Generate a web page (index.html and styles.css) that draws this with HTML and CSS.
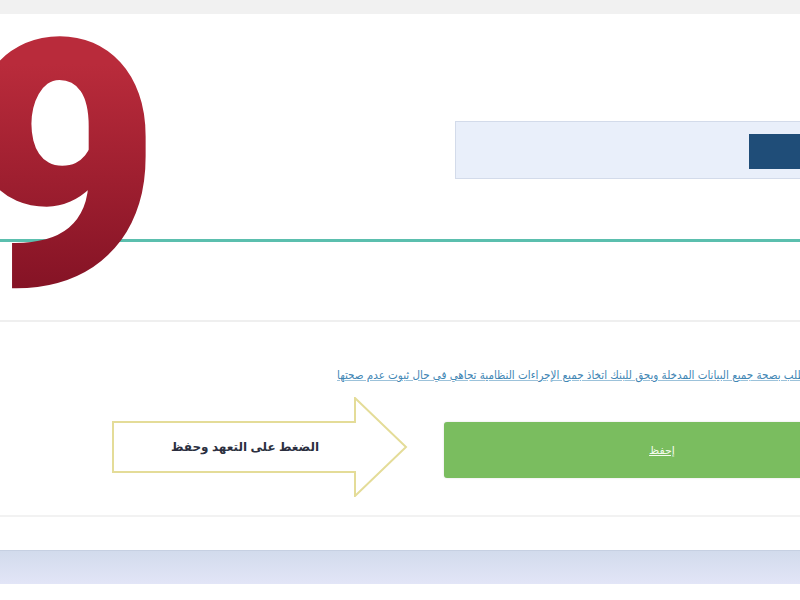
FILE: index.html
```html
<!DOCTYPE html>
<html lang="ar">
<head>
    <meta charset="UTF-8">
    <meta name="viewport" content="width=device-width, initial-scale=1.0">
    <title>التعهد وحفظ الطلب</title>
    <link rel="stylesheet" href="styles.css">
</head>
<body>
    <div class="topbar"></div>

    <div class="panel">
        <div class="step-number">9</div>
        <div class="search-row">
            <div class="search-box">
                <button class="search-btn" type="button"></button>
            </div>
        </div>
        <div class="teal-line"></div>
    </div>

    <div class="pledge">
        <div class="pledge-text">
            <a href="#">أتعهد أنا مقدم الطلب بصحة جميع البيانات المدخلة ويحق للبنك اتخاذ جميع الإجراءات النظامية تجاهي في حال ثبوت عدم صحتها</a>
        </div>
        <div class="action-row">
            <div class="arrow">
                <svg viewBox="0 0 296 100" width="296" height="100">
                    <polygon points="1,25 243,25 243,1 294,50 243,99 243,75 1,75" fill="#fff" stroke="#e4dc98" stroke-width="2"/>
                </svg>
                <span class="arrow-label">الضغط على التعهد وحفظ</span>
            </div>
            <button class="save-btn" type="button">إحفظ</button>
        </div>
    </div>

    <div class="footer-gap"></div>
    <div class="footer-band"></div>
</body>
</html>
```

FILE: styles.css
```css
body {
    margin: 0;
    background: #fff;
    font-family: "DejaVu Sans", "Noto Sans", sans-serif;
    overflow: hidden;
    height: 600px;
}
.topbar {
    height: 14px;
    background: #f1f1f1;
}
.panel {
    position: relative;
    height: 306px;
    background: #fff;
    border-bottom: 2px solid #efefef;
}
.step-number {
    position: absolute;
    left: -39px;
    top: -19px;
    font-family: Roboto, "Liberation Sans", sans-serif;
    font-weight: 900;
    font-size: 345px;
    line-height: 1;
    background: linear-gradient(#b92b3b 20%, #851325 85%);
    -webkit-background-clip: text;
    background-clip: text;
    color: transparent;
    z-index: 2;
}
.search-row {
    display: flex;
    justify-content: flex-end;
    padding-top: 107px;
}
.search-box {
    width: 344px;
    height: 56px;
    background: #e9effa;
    border: 1px solid #d3dbea;
    border-right: none;
    display: flex;
    justify-content: flex-end;
    align-items: center;
}
.search-btn {
    width: 51px;
    height: 35px;
    border: none;
    background: #1f4d78;
    margin-top: 2px;
}
.teal-line {
    margin-top: 60px;
    height: 3px;
    background: #5bbfae;
}
.pledge {
    height: 193px;
    border-bottom: 2px solid #f2f2f2;
}
.pledge-text {
    padding-left: 337px;
    padding-top: 42px;
    white-space: nowrap;
    height: 33px;
}
.pledge-text a {
    display: inline-block;
    direction: rtl;
    color: #3f86b4;
    font-family: "DejaVu Sans Condensed", "DejaVu Sans", sans-serif;
    font-size: 11.5px;
    text-decoration: underline;
    text-decoration-color: #9cc2da;
}
.action-row {
    display: flex;
    align-items: center;
    padding-left: 112px;
    gap: 36px;
}
.arrow {
    position: relative;
    flex-shrink: 0;
    width: 296px;
    height: 100px;
    display: flex;
    align-items: center;
    justify-content: center;
}
.arrow svg {
    position: absolute;
    left: 0;
    top: 0;
}
.arrow-label {
    position: relative;
    direction: rtl;
    font-family: "Liberation Sans", "DejaVu Sans", sans-serif;
    font-size: 12px;
    font-weight: bold;
    color: #2b2f3f;
    margin-left: -30px;
}
.save-btn {
    flex-shrink: 0;
    width: 370px;
    height: 56px;
    margin-top: 6px;
    border: none;
    border-radius: 3px 0 0 3px;
    background: #7abd5f;
    color: #f4fbef;
    font-family: "DejaVu Sans", sans-serif;
    font-size: 11px;
    text-decoration: underline;
    padding: 0 0 0 66px;
    box-shadow: 0 0 2px rgba(0,0,0,0.15);
}
.footer-gap {
    height: 33px;
}
.footer-band {
    height: 33px;
    border-top: 1px solid #c6d0e2;
    background: linear-gradient(#d2dbec, #e2e5f7);
}
```
